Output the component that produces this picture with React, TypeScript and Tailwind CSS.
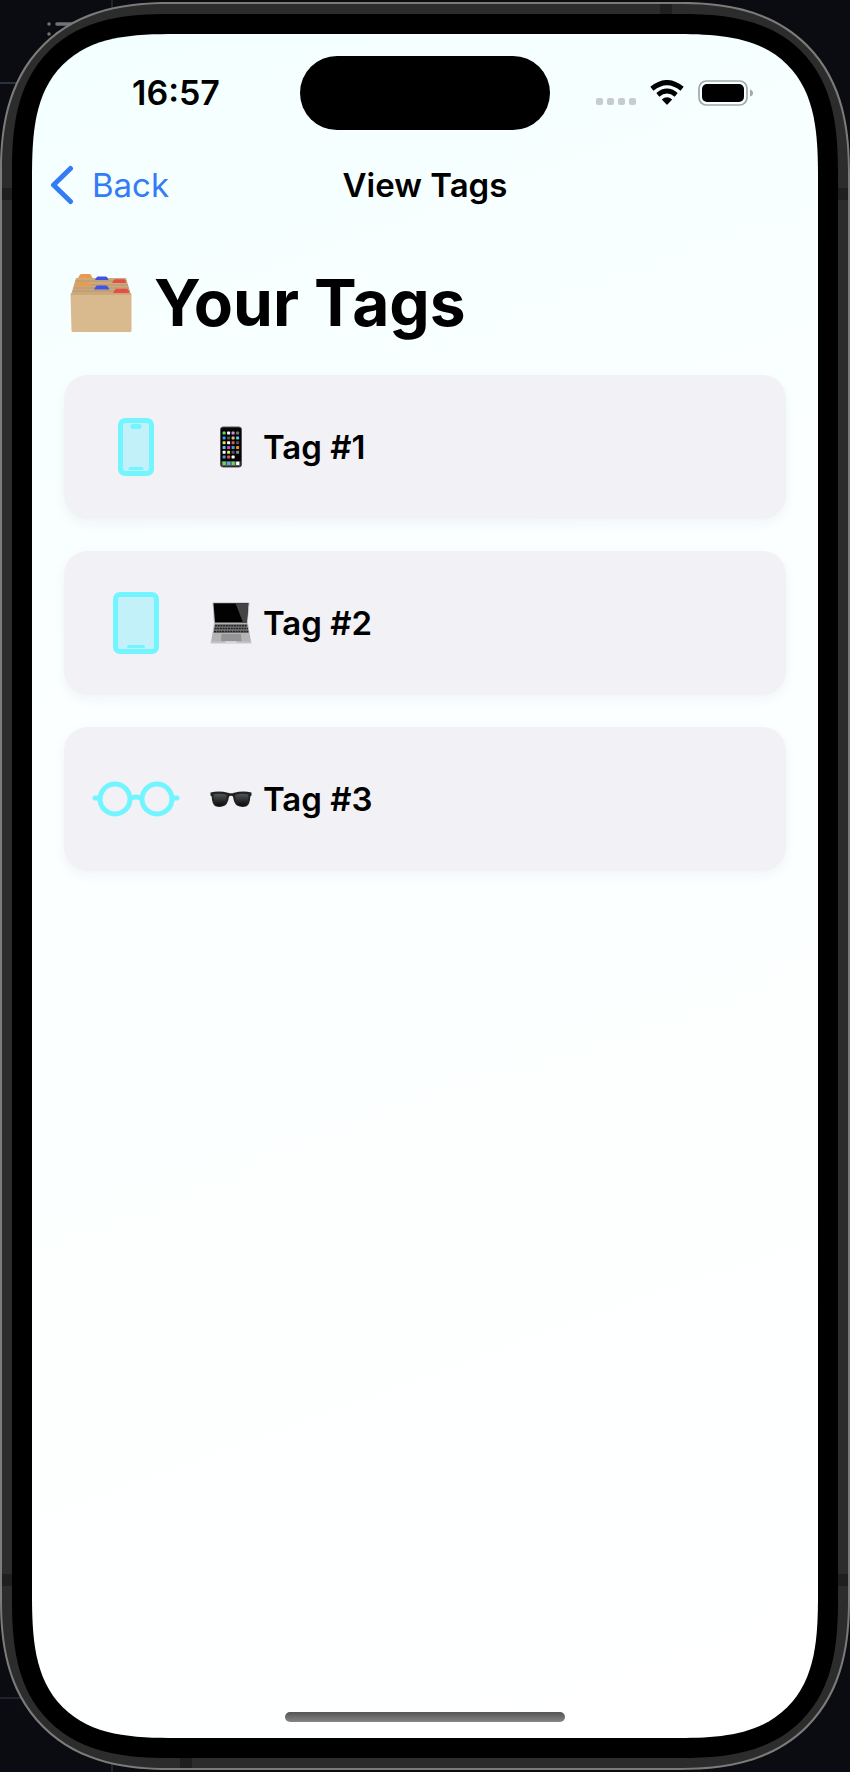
import type { ReactNode } from "react";

function FilesIcon() {
  return (
    <svg viewBox="0 0 62 60" className="h-[60px] w-[62px] shrink-0" aria-hidden="true">
      <path d="M6 5H56L61 22H1Z" fill="#cda97c" />
      <path d="M5.500 8H57M4.500 12H58M3.500 15H59M2.500 18H60" stroke="#b59670" strokeWidth="1" />
      <path d="M8 5L10 1.500Q10.500 1 12 1H19Q20.500 1 21 2L22.500 5Z" fill="#eb9a4d" />
      <path d="M25 7L26.500 4.500Q27 3.600 28 3.600H35.500Q36.800 3.600 37.300 4.500L38.500 7Z" fill="#4152e8" />
      <path d="M42 10L43.600 7.300Q44 6.300 45.500 6.300H54Q55 6.300 55.300 7.300L56 10Z" fill="#e34f47" />
      <path d="M4.500 13L6.500 10.500Q7 9.500 8.500 9.500H17.500Q19 9.500 19.500 10.500L21 13Z" fill="#eb9a4d" />
      <path d="M24 16.500L25.800 13.500Q26.300 12.600 27.500 12.600H36Q37.200 12.600 37.700 13.500L39.500 16.500Z" fill="#4152e8" />
      <path d="M43 20L44.800 17Q45.300 15.800 46.500 15.800H56.500Q57.700 15.800 58.200 17L59.500 20Z" fill="#e34f47" />
      <path d="M0.500 20.500H61.500V57.500Q61.500 59 60 59H3Q1.500 59 1.500 57.500Z" fill="#d9b98e" />
      <path d="M1 21H61" stroke="#c19d70" strokeWidth="1" />
    </svg>
  );
}

function PhoneIcon() {
  return (
    <svg viewBox="0 0 36 58" className="h-[58px] w-9" aria-hidden="true">
      <rect x="2.500" y="2.500" width="31" height="53" rx="4.500" fill="#c3f1fa" stroke="#73f5ff" strokeWidth="5" />
      <rect x="12.500" y="6" width="11" height="5" rx="2.500" fill="#73f5ff" />
      <rect x="10.500" y="49" width="15" height="3" rx="1.500" fill="#73f5ff" />
    </svg>
  );
}

function TabletIcon() {
  return (
    <svg viewBox="0 0 46 62" className="h-[62px] w-[46px]" aria-hidden="true">
      <rect x="2.500" y="2.500" width="41" height="57" rx="4.500" fill="#c3f1fa" stroke="#73f5ff" strokeWidth="5" />
      <rect x="14" y="53" width="18" height="3" rx="1.500" fill="#73f5ff" />
    </svg>
  );
}

function GlassesIcon() {
  return (
    <svg viewBox="0 0 88 36" className="h-9 w-[88px]" fill="none" stroke="#73f5ff" strokeWidth="5" aria-hidden="true">
      <circle cx="23" cy="18" r="15" />
      <circle cx="65" cy="18" r="15" />
      <path d="M38 17.500Q44 14.500 50 17.500" />
      <path d="M8 17H3M80 17H85" strokeLinecap="round" />
    </svg>
  );
}

const appColors = [
  ["#65d85b", "#ffffff", "#cf8be0", "#777777"],
  ["#3f9bea", "#555555", "#d3bd86", "#5cc8e8"],
  ["#e8e04c", "#ffffff", "#e05a45", "#555555"],
  ["#5cc8e8", "#c84be0", "#3f9bea", "#ef8c1f"],
  ["#ffffff", "#e8e04c", "#555555", "#888888"],
  ["#3f9bea", "#e05a45", "#ffffff", "#050505"],
];
const dockColors = ["#65d85b", "#4ab4f0", "#65d85b", "#ffffff"];

function MobileEmoji() {
  return (
    <svg viewBox="0 0 42 42" className="h-[42px] w-[42px]" aria-hidden="true">
      <rect x="10.500" y="1" width="21" height="40" rx="2.500" fill="#050505" stroke="#555" strokeWidth="1" />
      {appColors.map((row, r) =>
        row.map((color, c) => (
          <rect key={`${r}-${c}`} x={12.6 + c * 4.5} y={5.6 + r * 4.8} width="3" height="3" rx="0.600" fill={color} />
        )),
      )}
      <rect x="11.500" y="35" width="19" height="5" fill="#555" />
      {dockColors.map((color, c) => (
        <rect key={c} x={12.6 + c * 4.5} y="35.800" width="3.200" height="3.200" rx="0.600" fill={color} />
      ))}
    </svg>
  );
}

function LaptopEmoji() {
  return (
    <svg viewBox="0 0 42 42" className="h-[42px] w-[42px]" aria-hidden="true">
      <path d="M2.500 0.500H39.500L37.500 22H4Z" fill="#b5b5b5" />
      <path d="M3.500 1.300H38.300L36.800 20.500H5Z" fill="#020202" />
      <path d="M25.500 1.300H38.300L36.800 20.500H33Z" fill="#444" />
      <path d="M4 21.500H38L41 40H1Z" fill="#b4b4b6" />
      <path d="M5 22H37L38.500 31H3.500Z" fill="#777" />
      <path d="M5 23.700H37.500M4.500 26.500H38M4 29.500H38.500" stroke="#222" strokeWidth="1.600" strokeDasharray="2 0.700" />
      <path d="M11.500 32H31L31.500 39.500H11Z" fill="#949496" />
      <path d="M0.500 39.500H41.500V40.500Q41.500 41.500 40 41.500H2Q0.500 41.500 0.500 40.500Z" fill="#c5c5c7" />
      <path d="M15 39.500H27L26 40.500H16Z" fill="#eee" />
    </svg>
  );
}

function SunglassesEmoji() {
  return (
    <svg viewBox="0 0 42 42" className="h-[42px] w-[42px]" aria-hidden="true">
      <defs>
        <linearGradient id="lens" x1="0" y1="0" x2="0" y2="1">
          <stop offset="0" stopColor="#505756" />
          <stop offset="1" stopColor="#0a0a0a" />
        </linearGradient>
      </defs>
      <path d="M0.500 14.500Q9 12.500 18 14.800Q21 15.800 24 14.800Q33 12.500 41.500 14.500V17.500L40.300 18.500Q40 26.500 36.500 28.300Q31.500 30 27 27.500Q24 25.500 23 18.500Q21 16.800 19 18.500Q18 25.500 15 27.500Q10.500 30 5.500 28.300Q2 26.500 1.700 18.500L0.500 17.500Z" fill="#222" />
      <path d="M3.500 16.500Q10 14.800 16.700 17Q16.500 25 13.500 27Q9 28.600 6 27.200Q3.500 25 3.500 16.500ZM25.300 17Q32 14.800 38.500 16.500Q38.500 25 36 27.200Q33 28.600 28.500 27Q25.500 25 25.300 17Z" fill="url(#lens)" />
    </svg>
  );
}

function WifiIcon() {
  return (
    <svg viewBox="0 0 34 26" className="h-[26px] w-[34px]" aria-hidden="true">
      <path d="M1.900 8.700Q17 -3.600 32.100 8.700" fill="none" stroke="#000" strokeWidth="5" />
      <path d="M7.800 14.800Q17 7.400 26.200 14.800" fill="none" stroke="#000" strokeWidth="4.800" />
      <path d="M11.800 19.500Q17 15 22.200 19.500L17.700 24.300Q17 25 16.300 24.300Z" fill="#000" />
    </svg>
  );
}

function BatteryIcon() {
  return (
    <svg viewBox="0 0 56 26" className="h-[26px] w-[56px]" aria-hidden="true">
      <rect x="1" y="1" width="48" height="24" rx="7.500" fill="none" stroke="#a3a7a7" strokeWidth="1.700" />
      <rect x="4" y="4" width="42" height="18" rx="5" fill="#000" />
      <path d="M52 9.500Q55 10.500 55 13Q55 15.500 52 16.500Z" fill="#a3a7a7" />
    </svg>
  );
}

type Tag = { name: string; icon: ReactNode; emoji: ReactNode };

const tags: Tag[] = [
  { name: "Tag #1", icon: <PhoneIcon />, emoji: <MobileEmoji /> },
  { name: "Tag #2", icon: <TabletIcon />, emoji: <LaptopEmoji /> },
  { name: "Tag #3", icon: <GlassesIcon />, emoji: <SunglassesEmoji /> },
];

function StatusBar() {
  return (
    <div className="grid grid-cols-[1fr_250px_1fr] items-center pt-[22px]">
      <time className="pl-[100px] text-[34px] leading-10 font-semibold">16:57</time>
      <div className="h-[74px] rounded-full bg-black" />
      <div className="flex items-center pl-[46px]">
        <div className="flex gap-1 pt-4">
          {[0, 1, 2, 3].map((dot) => (
            <span key={dot} className="size-[7px] rounded-[2px] bg-[#c8cccc]" />
          ))}
        </div>
        <div className="flex gap-[14px] pl-[14px]">
          <WifiIcon />
          <BatteryIcon />
        </div>
      </div>
    </div>
  );
}

export default function App() {
  return (
    <div className="relative flex min-h-screen flex-col bg-[#0a0c11] py-[2px] font-[Inter,sans-serif] text-black">
      <div className="absolute inset-y-0 left-[111px] w-[2px] bg-[#20242a]" />
      <div className="absolute top-[82px] left-0 h-[2px] w-10 bg-[#2c3338]" />
      <div className="absolute bottom-[73px] left-0 h-[2px] w-10 bg-[#20242a]" />
      <svg viewBox="0 0 28 16" className="absolute top-[21px] left-[46px] h-4 w-7" aria-hidden="true">
        <path d="M3 3h.01M3 13h.01M11 3h15M11 13h15" stroke="#70727b" strokeWidth="3.500" strokeLinecap="round" />
      </svg>

      <div className="relative flex grow flex-col rounded-[170px] border-2 border-[#7b7b79] bg-[#2c2c2c] p-[10px] [corner-shape:superellipse(1.27)]">
        <span className="absolute top-0 right-[176px] h-[10px] w-3 bg-[#1f1f1f]" />
        <span className="absolute bottom-0 left-[178px] h-[10px] w-3 bg-[#1f1f1f]" />
        <span className="absolute top-[184px] left-0 h-3 w-[10px] bg-[#1f1f1f]" />
        <span className="absolute top-[184px] right-0 h-3 w-[10px] bg-[#1f1f1f]" />
        <span className="absolute bottom-[182px] left-0 h-3 w-[10px] bg-[#1f1f1f]" />
        <span className="absolute right-0 bottom-[182px] h-3 w-[10px] bg-[#1f1f1f]" />

        <div className="flex grow flex-col rounded-[158px] bg-black p-5 [corner-shape:superellipse(1.38)]">
          <div className="flex grow flex-col rounded-[145px] bg-linear-160 from-[#f3ffff] via-[#fbffff] via-35% to-white [corner-shape:superellipse(1.54)]">
            <StatusBar />

            <header className="mt-[29px] grid h-[52px] grid-cols-[1fr_auto_1fr] items-center pl-[18px] pr-[18px]">
              <a href="#back" className="flex items-center gap-[18px] text-[33px] leading-10 text-[#347cf6]">
                <svg viewBox="0 0 24 40" className="h-10 w-6" aria-hidden="true">
                  <path d="M20.500 3.500L3.500 20L20.500 36.500" fill="none" stroke="#347cf6" strokeWidth="5" strokeLinecap="round" strokeLinejoin="round" />
                </svg>
                Back
              </a>
              <h1 className="text-[33px] leading-10 font-semibold">View Tags</h1>
            </header>

            <main className="flex flex-col gap-[34px] px-8 pt-[54px]">
              <h2 className="flex h-[76px] items-center gap-[22px] pl-[6px] text-[64px] leading-[76px] font-bold">
                <FilesIcon />
                Your Tags
              </h2>
              <ul className="flex flex-col gap-8">
                {tags.map((tag) => (
                  <li
                    key={tag.name}
                    className="flex h-36 items-center rounded-[24px] bg-[#f2f1f6] px-6 shadow-[0_4px_12px_rgba(0,40,40,0.05)]"
                  >
                    <span className="flex w-24 justify-center">{tag.icon}</span>
                    <span className="flex items-center gap-[11px] pl-[26px] text-[33px] leading-10 font-semibold">
                      {tag.emoji}
                      {tag.name}
                    </span>
                  </li>
                ))}
              </ul>
            </main>

            <div className="mx-auto mt-auto mb-4 h-[10px] w-[280px] rounded-full bg-linear-to-b from-[#555] to-[#858585]" />
          </div>
        </div>
      </div>
    </div>
  );
}
